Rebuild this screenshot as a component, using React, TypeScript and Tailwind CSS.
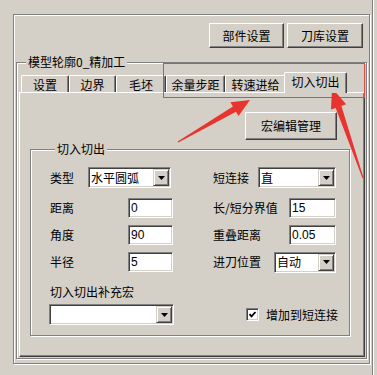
const raised =
  "border border-t-white border-l-white border-r-[#404040] border-b-[#404040] shadow-[inset_-1px_-1px_0_#808080]";
const sunken =
  "border border-t-[#808080] border-l-[#808080] border-r-white border-b-white shadow-[inset_1px_1px_0_#404040,inset_-1px_-1px_0_#d4d0c8]";
const etched = "border border-[#808080] shadow-[inset_1px_1px_0_#fff,1px_1px_0_#fff]";
const dropBtn =
  "border border-t-[#d4d0c8] border-l-[#d4d0c8] border-r-[#404040] border-b-[#404040] shadow-[inset_1px_1px_0_#fff,inset_-1px_-1px_0_#808080]";

function Button({ label, className }: { label: string; className: string }) {
  return (
    <div className={`${raised} flex items-center justify-center bg-[#d4d0c8] leading-[14px] ${className}`}>
      {label}
    </div>
  );
}

function Combo({ text, className }: { text: string; className: string }) {
  return (
    <div className={`${sunken} flex h-[21px] items-center bg-white ${className}`}>
      <span className="flex-1 pl-[2px] leading-[14px]">{text}</span>
      <span className={`${dropBtn} mr-[1px] flex h-[17px] w-[16px] items-center justify-center bg-[#d4d0c8]`}>
        <svg width="7" height="4" viewBox="0 0 7 4">
          <path d="M0 0h7L3.5 4z" fill="#000" />
        </svg>
      </span>
    </div>
  );
}

function Field({ value, className }: { value: string; className: string }) {
  return (
    <div
      className={`${sunken} flex h-[20px] items-center bg-white pl-[2px] font-['Liberation_Sans',sans-serif] leading-[14px] ${className}`}
    >
      {value}
    </div>
  );
}

function Tab({ label, className }: { label: string; className: string }) {
  return (
    <div
      className={`flex h-[17px] items-center justify-center rounded-t-[2px] border-t border-l border-r border-t-white border-l-white border-r-[#404040] pt-[1px] leading-[14px] shadow-[inset_-1px_0_0_#808080] ${className}`}
    >
      {label}
    </div>
  );
}

export default function App() {
  return (
    <div className="relative flex h-[375px] w-[377px] overflow-hidden bg-[#d4d0c8] font-['Noto_Sans_CJK_SC',sans-serif] text-[12px] text-black">
      <div className="w-[372px] pl-[13px] pt-[14px]">
        <div className={`${etched} flex h-[350px] w-[357px] flex-col`}>
          <div className="mt-[8px] flex justify-end gap-[3px] pr-[6px]">
            <Button label="部件设置" className="h-[25px] w-[75px]" />
            <Button label="刀库设置" className="h-[25px] w-[76px]" />
          </div>

          {/* 模型轮廓 group */}
          <fieldset className={`${etched} ml-[2px] mt-[7px] w-[351px] pb-[1px] pl-[2px]`}>
            <legend className="ml-[7px] bg-[#d4d0c8] px-[2px] leading-[14px]">模型轮廓0_精加工</legend>
            <div className="flex items-end pl-[2px] pt-[3px]">
              <Tab label="设置" className="w-[48px]" />
              <Tab label="边界" className="w-[47px]" />
              <Tab label="毛坯" className="w-[50px]" />
              <Tab label="余量步距" className="w-[59px]" />
              <Tab label="转速进给" className="w-[61px]" />
              <div className="relative z-10 -mb-[1px] ml-[-2px] flex h-[21px] w-[63px] items-start justify-center rounded-t-[2px] border-t border-l border-r border-t-white border-l-white border-r-[#404040] bg-[#d4d0c8] pt-[2px] leading-[14px] shadow-[inset_-1px_0_0_#808080]">
                切入切出
              </div>
            </div>

            {/* tab page */}
            <div className={`${raised} flex h-[265px] w-[346px] flex-col`}>
              <div className="mt-[19px] flex justify-end pr-[27px]">
                <Button label="宏编辑管理" className="h-[28px] w-[92px]" />
              </div>

              <fieldset className={`${etched} ml-[10px] mt-[2px] h-[194px] w-[320px] pl-[19px] pt-[11px]`}>
                <legend className="ml-[5px] bg-[#d4d0c8] px-[2px] leading-[14px]">切入切出</legend>

                <div className="flex h-[21px] items-center">
                  <div className="flex w-[163px] items-center">
                    <span className="w-[38px] leading-[14px]">类型</span>
                    <Combo text="水平圆弧" className="w-[83px]" />
                  </div>
                  <div className="flex items-center">
                    <span className="w-[45px] leading-[14px]">短连接</span>
                    <Combo text="直" className="w-[78px]" />
                  </div>
                </div>

                <div className="mt-[10px] flex h-[20px] items-center">
                  <div className="flex w-[163px] items-center">
                    <span className="w-[78px] leading-[14px]">距离</span>
                    <Field value="0" className="w-[45px]" />
                  </div>
                  <div className="flex items-center">
                    <span className="w-[76px] leading-[14px]">长/短分界值</span>
                    <Field value="15" className="w-[47px]" />
                  </div>
                </div>

                <div className="mt-[7px] flex h-[20px] items-center">
                  <div className="flex w-[163px] items-center">
                    <span className="w-[78px] leading-[14px]">角度</span>
                    <Field value="90" className="w-[45px]" />
                  </div>
                  <div className="flex items-center">
                    <span className="w-[76px] leading-[14px]">重叠距离</span>
                    <Field value="0.05" className="w-[47px]" />
                  </div>
                </div>

                <div className="mt-[7px] flex h-[20px] items-center">
                  <div className="flex w-[163px] items-center">
                    <span className="w-[78px] leading-[14px]">半径</span>
                    <Field value="5" className="w-[45px]" />
                  </div>
                  <div className="flex items-center">
                    <span className="w-[61px] leading-[14px]">进刀位置</span>
                    <Combo text="自动" className="w-[62px]" />
                  </div>
                </div>

                <div className="mt-[13px] leading-[14px]">切入切出补充宏</div>

                <div className="mt-[5px] flex h-[21px] items-center">
                  <div className="w-[163px]">
                    <Combo text="" className="ml-[-1px] w-[125px]" />
                  </div>
                  <div className="flex items-center gap-[7px] pl-[33px]">
                    <span className={`${sunken} flex h-[13px] w-[13px] items-center justify-center bg-white`}>
                      <svg width="9" height="9" viewBox="0 0 9 9">
                        <path d="M1.5 4.2l2 2.2 4-4.4" fill="none" stroke="#000" strokeWidth="1.8" />
                      </svg>
                    </span>
                    <span className="leading-[14px]">增加到短连接</span>
                  </div>
                </div>
              </fieldset>
            </div>
          </fieldset>
        </div>
      </div>
      <div className="h-full w-[2px] border-l border-r border-l-[#808080] border-r-white" />

      {/* red annotation */}
      <div className="pointer-events-none absolute left-[163px] top-[63px] h-[35px] w-[202px] border border-[#e24848]" />
      <svg className="pointer-events-none absolute left-0 top-0" width="377" height="375" viewBox="0 0 377 375">
        <polygon
          points="178.3,142.4 236,111.7 238.5,116 250,100 230.4,102.2 232.9,106.5 177.7,141.6"
          fill="#e8332e"
        />
        <polygon
          points="363.5,177.8 341.4,105.9 346.1,104.3 332,88 331,109.5 335.7,107.9 362.5,178.2"
          fill="#e8332e"
        />
      </svg>
    </div>
  );
}
